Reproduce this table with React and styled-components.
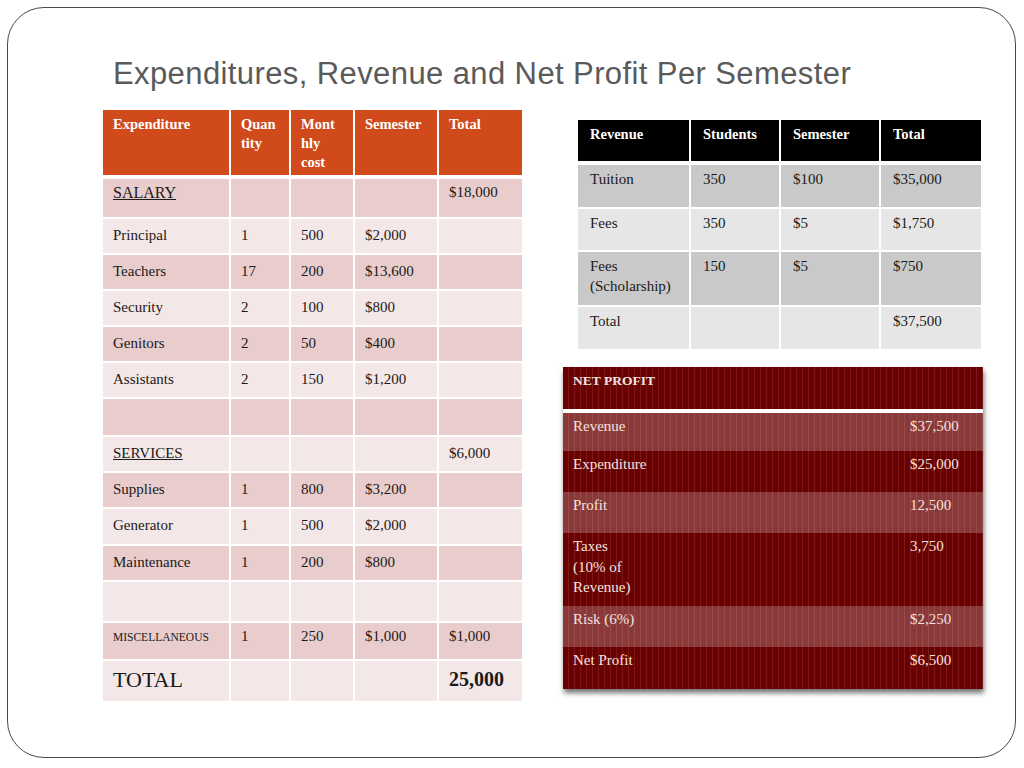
import styled, { createGlobalStyle } from "styled-components";

const expenditures = [
    { cells: ["SALARY", "", "", "", "$18,000"], kind: "section", h: 38 },
    { cells: ["Principal", "1", "500", "$2,000", ""], h: 34 },
    { cells: ["Teachers", "17", "200", "$13,600", ""], h: 34 },
    { cells: ["Security", "2", "100", "$800", ""], h: 34 },
    { cells: ["Genitors", "2", "50", "$400", ""], h: 34 },
    { cells: ["Assistants", "2", "150", "$1,200", ""], h: 34 },
    { cells: ["", "", "", "", ""], h: 36 },
    { cells: ["SERVICES", "", "", "", "$6,000"], kind: "services", h: 34 },
    { cells: ["Supplies", "1", "800", "$3,200", ""], h: 34 },
    { cells: ["Generator", "1", "500", "$2,000", ""], h: 35 },
    { cells: ["Maintenance", "1", "200", "$800", ""], h: 34 },
    { cells: ["", "", "", "", ""], h: 39 },
    { cells: ["MISCELLANEOUS", "1", "250", "$1,000", "$1,000"], kind: "misc", h: 36 },
    { cells: ["TOTAL", "", "", "", "25,000"], kind: "total", h: 40 },
];

const revenues = [
    { cells: ["Tuition", "350", "$100", "$35,000"], h: 42 },
    { cells: ["Fees", "350", "$5", "$1,750"], h: 41 },
    { cells: [<>Fees<br />(Scholarship)</>, "150", "$5", "$750"], h: 53 },
    { cells: ["Total", "", "", "$37,500"], h: 42 },
];

const profits = [
    { label: "Revenue", value: "$37,500", h: 40 },
    { label: "Expenditure", value: "$25,000", h: 41 },
    { label: "Profit", value: "12,500", h: 41 },
    { label: <>Taxes<br />(10% of<br />Revenue)</>, value: "3,750", h: 73 },
    { label: "Risk (6%)", value: "$2,250", h: 41 },
    { label: "Net Profit", value: "$6,500", h: 42 },
];

const cellKind = (row, j) => {
    if (j === 0) return row.kind;
    if (row.kind === "total") return j === 4 ? "grand" : "total";
    if (row.kind === "misc") return "miscValue";
    if (row.kind === "section") return "sectionValue";
    return undefined;
};

const App = () => {
    return (
        <>
            <GlobalStyle />
            <Frame>
                <Title>Expenditures, Revenue and Net Profit Per Semester</Title>
                <Content>
                    <CostTable>
                        <colgroup>
                            <col width="126" />
                            <col width="58" />
                            <col width="62" />
                            <col width="82" />
                            <col width="83" />
                        </colgroup>
                        <thead>
                            <Row h={67}>
                                <CostHead>Expenditure</CostHead>
                                <CostHead>Quan<br />tity</CostHead>
                                <CostHead>Mont<br />hly<br />cost</CostHead>
                                <CostHead>Semester</CostHead>
                                <CostHead>Total</CostHead>
                            </Row>
                        </thead>
                        <tbody>
                            {expenditures.map((row, i) => (
                                <Row key={i} h={row.h}>
                                    {row.cells.map((c, j) => (
                                        <CostCell key={j} $odd={i % 2 === 0} $kind={cellKind(row, j)}>
                                            {c}
                                        </CostCell>
                                    ))}
                                </Row>
                            ))}
                        </tbody>
                    </CostTable>
                    <RightSide>
                        <RevenueTable>
                            <colgroup>
                                <col width="111" />
                                <col width="88" />
                                <col width="98" />
                                <col width="100" />
                            </colgroup>
                            <thead>
                                <Row h={43}>
                                    <RevenueHead>Revenue</RevenueHead>
                                    <RevenueHead>Students</RevenueHead>
                                    <RevenueHead>Semester</RevenueHead>
                                    <RevenueHead>Total</RevenueHead>
                                </Row>
                            </thead>
                            <tbody>
                                {revenues.map((row, i) => (
                                    <Row key={i} h={row.h}>
                                        {row.cells.map((c, j) => (
                                            <RevenueCell key={j} $odd={i % 2 === 0}>{c}</RevenueCell>
                                        ))}
                                    </Row>
                                ))}
                            </tbody>
                        </RevenueTable>
                        <ProfitTable>
                            <colgroup>
                                <col width="337" />
                                <col width="83" />
                            </colgroup>
                            <thead>
                                <Row h={44}>
                                    <ProfitHead colSpan={2}>NET PROFIT</ProfitHead>
                                </Row>
                            </thead>
                            <tbody>
                                {profits.map((row, i) => (
                                    <ProfitRow key={i} h={row.h} $light={i % 2 === 0}>
                                        <ProfitCell>{row.label}</ProfitCell>
                                        <ProfitCell>{row.value}</ProfitCell>
                                    </ProfitRow>
                                ))}
                            </tbody>
                        </ProfitTable>
                    </RightSide>
                </Content>
            </Frame>
        </>
    )
}

const GlobalStyle = createGlobalStyle`
    html, body {
        margin: 0;
        padding: 0;
        background: #ffffff;
    }
    * {
        box-sizing: border-box;
    }
`;

const Frame = styled.div`
    margin: 7px;
    width: 1009px;
    height: 751px;
    border: 1.3px solid #4a4a4a;
    border-radius: 37px;
    padding: 46px 0 0 95px;
    display: flex;
    flex-direction: column;
    font-family: "Liberation Serif", "Times New Roman", serif;
`;

const Title = styled.h1`
    margin: 0 0 0 10px;
    font-family: "Liberation Sans", Arial, sans-serif;
    font-weight: 400;
    font-size: 31px;
    letter-spacing: 0.4px;
    line-height: 40px;
    color: #5a5a5a;
    white-space: nowrap;
`;

const Content = styled.div`
    display: flex;
    align-items: flex-start;
    margin-top: 16px;
`;

const Row = styled.tr`
    height: ${(props) => props.h}px;
`;

const CostTable = styled.table`
    table-layout: fixed;
    border-collapse: separate;
    border-spacing: 2px;
    margin: -2px;
    width: 423px;
    font-size: 15px;
    color: #1a1a1a;
`;

const CostHead = styled.th`
    background-color: #d04a1b;
    color: #ffffff;
    text-align: left;
    vertical-align: top;
    font-size: 14.5px;
    line-height: 19px;
    font-weight: 700;
    padding: 5px 4px 0 10px;
    border-bottom: 2px solid #ffffff;
    white-space: nowrap;
`;

const sizes = {
    section: "16px",
    misc: "11.5px",
    total: "22px",
    grand: "20px",
};

const tops = {
    section: "5px",
    sectionValue: "4px",
    misc: "5px",
    miscValue: "4px",
    total: "10px",
    grand: "9px",
};

const CostCell = styled.td`
    background-color: ${(props) => (props.$odd ? "#e9cdcc" : "#f4e7e7")};
    vertical-align: top;
    padding: ${(props) => tops[props.$kind] || "7px"} 4px 0 10px;
    line-height: 18px;
    white-space: nowrap;
    overflow: hidden;
    text-decoration: ${(props) => (props.$kind === "section" || props.$kind === "services" ? "underline" : "none")};
    font-size: ${(props) => sizes[props.$kind] || "15px"};
    font-weight: ${(props) => (props.$kind === "grand" ? 700 : 400)};
`;

const RightSide = styled.div`
    display: flex;
    flex-direction: column;
    margin-left: 41px;
`;

const RevenueTable = styled.table`
    table-layout: fixed;
    border-collapse: separate;
    border-spacing: 2px;
    margin: 8px 0 0 13px;
    width: 407px;
    font-size: 15px;
    color: #1a1a1a;
`;

const RevenueHead = styled.th`
    background-color: #000000;
    color: #ffffff;
    text-align: left;
    vertical-align: top;
    font-size: 14.5px;
    line-height: 18px;
    font-weight: 700;
    padding: 5px 4px 0 12px;
    border-bottom: 2px solid #ffffff;
    white-space: nowrap;
`;

const RevenueCell = styled.td`
    background-color: ${(props) => (props.$odd ? "#c9c9c9" : "#e6e6e6")};
    vertical-align: top;
    padding: 4px 6px 0 12px;
    line-height: 20px;
`;

const ProfitTable = styled.table`
    table-layout: fixed;
    border-collapse: collapse;
    width: 420px;
    margin-top: 16px;
    font-size: 15px;
    color: #f3e3df;
    background-color: #6a0000;
    background-image: repeating-linear-gradient(90deg, rgba(255, 255, 255, 0) 0 5px, rgba(255, 255, 255, 0.1) 5px 6px);
    box-shadow: 1px 4px 5px rgba(0, 0, 0, 0.55);
`;

const ProfitHead = styled.th`
    text-align: left;
    vertical-align: top;
    font-size: 13.5px;
    font-weight: 700;
    line-height: 18px;
    padding: 5px 0 0 10px;
    border-bottom: 4px solid #ffffff;
`;

const ProfitRow = styled.tr`
    height: ${(props) => props.h}px;
    background-color: ${(props) => (props.$light ? "rgba(255, 255, 255, 0.22)" : "transparent")};
`;

const ProfitCell = styled.td`
    vertical-align: top;
    line-height: 20.5px;
    padding: 3px 0 0 10px;
`;

export default App;
